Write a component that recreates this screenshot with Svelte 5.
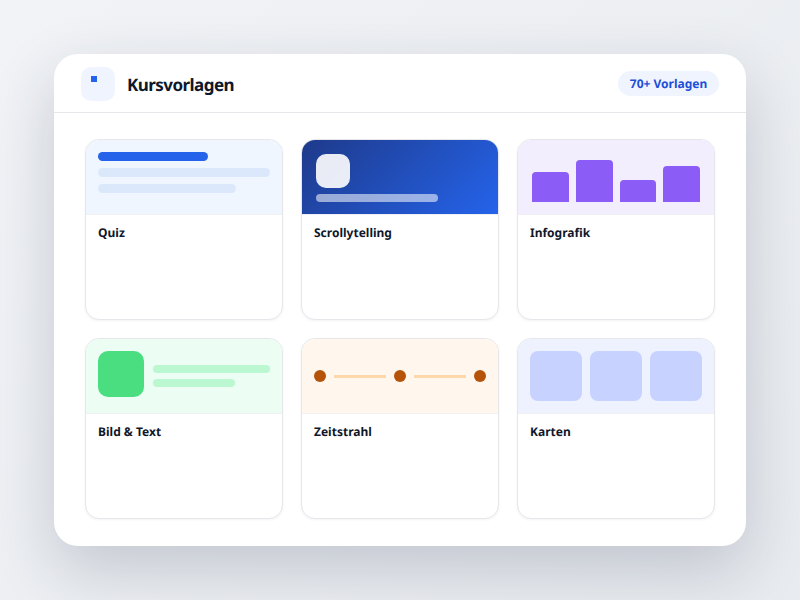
<script lang="ts">
	const bars = [30, 42, 22, 36];
</script>

<div class="stage">
	<section class="panel">
		<header class="head">
			<div class="logo"><span class="logo-dot"></span></div>
			<h1>Kursvorlagen</h1>
			<span class="badge">70+ Vorlagen</span>
		</header>

		<div class="grid">
			<article class="card">
				<div class="thumb quiz">
					<span class="line strong"></span>
					<span class="line mid"></span>
					<span class="line short"></span>
				</div>
				<h2>Quiz</h2>
			</article>

			<article class="card">
				<div class="thumb scrolly">
					<span class="scrolly-box"></span>
					<span class="scrolly-bar"></span>
				</div>
				<h2>Scrollytelling</h2>
			</article>

			<article class="card">
				<div class="thumb info">
					{#each bars as h}
						<span class="bar" style="height: {h}px"></span>
					{/each}
				</div>
				<h2>Infografik</h2>
			</article>

			<article class="card">
				<div class="thumb media">
					<span class="media-img"></span>
					<div class="media-lines">
						<span></span>
						<span class="media-short"></span>
					</div>
				</div>
				<h2>Bild &amp; Text</h2>
			</article>

			<article class="card">
				<div class="thumb timeline">
					<span class="dot"></span>
					<span class="link"></span>
					<span class="dot"></span>
					<span class="link"></span>
					<span class="dot"></span>
				</div>
				<h2>Zeitstrahl</h2>
			</article>

			<article class="card">
				<div class="thumb tiles">
					<span></span>
					<span></span>
					<span></span>
				</div>
				<h2>Karten</h2>
			</article>
		</div>
	</section>
</div>

<style>
	:global(body) {
		margin: 0;
		background: linear-gradient(135deg, #f1f3f6, #e8ebef);
		font-family: "Noto Sans", sans-serif;
		text-rendering: geometricPrecision;
	}

	.stage {
		width: 800px;
		height: 600px;
		display: flex;
		align-items: center;
		justify-content: center;
		overflow: hidden;
	}

	.panel {
		width: 692px;
		height: 492px;
		background: #fff;
		border-radius: 24px;
		box-shadow: 0 24px 64px rgba(30, 41, 70, 0.2);
	}

	.head {
		height: 58px;
		display: flex;
		align-items: center;
		gap: 12px;
		padding: 0 27px;
		border-bottom: 1px solid #e5e7eb;
	}

	.logo {
		width: 34px;
		height: 34px;
		margin-top: 1px;
		border-radius: 10px;
		background: #eff4ff;
		box-sizing: border-box;
		padding: 9px 0 0 10px;
	}

	.logo-dot {
		display: block;
		width: 6px;
		height: 6px;
		background: #2563eb;
	}

	h1 {
		flex: 1;
		margin: 2px 0 0;
		font-size: 17px;
		font-weight: 700;
		letter-spacing: -0.55px;
		color: #0f172a;
	}

	.badge {
		width: 101px;
		height: 25px;
		line-height: 25px;
		text-align: center;
		border-radius: 13px;
		background: #eff4ff;
		color: #1d4ed8;
		font-size: 12px;
		font-weight: 700;
	}

	.grid {
		display: grid;
		grid-template-columns: repeat(3, 198px);
		grid-auto-rows: 181px;
		gap: 18px;
		padding: 26px 31px 0;
	}

	.card {
		border: 1px solid #e5e7eb;
		border-radius: 14px;
		background: #fff;
		overflow: hidden;
		box-shadow: 0 1px 3px rgba(15, 23, 42, 0.05);
	}

	.thumb {
		height: 75px;
		box-sizing: border-box;
		border-bottom: 1px solid #eef0f3;
		display: flex;
	}

	h2 {
		margin: 0;
		padding: 10px 12px 0;
		font-size: 12px;
		font-weight: 700;
		line-height: 16px;
		color: #0f172a;
	}

	.quiz {
		background: #eff6ff;
		flex-direction: column;
		gap: 7px;
		padding: 12px;
	}

	.line {
		height: 9px;
		border-radius: 5px;
		background: #dbe7fb;
	}

	.strong {
		width: 110px;
		background: #2563eb;
	}

	.mid {
		width: 172px;
	}

	.short {
		width: 138px;
	}

	.scrolly {
		background: linear-gradient(135deg, #1e3a8a, #2563eb);
		flex-direction: column;
		gap: 6px;
		padding: 14px;
	}

	.scrolly-box {
		width: 34px;
		height: 34px;
		flex: none;
		border-radius: 10px;
		background: rgba(255, 255, 255, 0.9);
	}

	.scrolly-bar {
		width: 122px;
		height: 8px;
		flex: none;
		border-radius: 4px;
		background: rgba(255, 255, 255, 0.55);
	}

	.info {
		background: #f3eefd;
		align-items: flex-end;
		gap: 7px;
		padding: 0 14px 12px;
	}

	.bar {
		flex: 1;
		border-radius: 4px 4px 0 0;
		background: #8b5cf6;
	}

	.media {
		background: #ecfdf3;
		align-items: center;
		gap: 9px;
		padding: 12px;
	}

	.media-img {
		width: 46px;
		height: 46px;
		flex: none;
		align-self: flex-start;
		border-radius: 10px;
		background: #4ade80;
	}

	.media-lines {
		flex: 1;
		display: flex;
		flex-direction: column;
		gap: 6px;
	}

	.media-lines span {
		height: 8px;
		border-radius: 4px;
		background: #bbf7d0;
	}

	.media-lines .media-short {
		width: 70%;
	}

	.timeline {
		background: #fff7ed;
		align-items: center;
		gap: 8px;
		padding: 0 12px;
	}

	.dot {
		width: 12px;
		height: 12px;
		flex: none;
		border-radius: 50%;
		background: #b45309;
	}

	.link {
		flex: 1;
		height: 3px;
		background: #fed7aa;
	}

	.tiles {
		background: #eef2ff;
		gap: 8px;
		padding: 12px;
	}

	.tiles span {
		flex: 1;
		border-radius: 8px;
		background: #c7d2fe;
	}
</style>
